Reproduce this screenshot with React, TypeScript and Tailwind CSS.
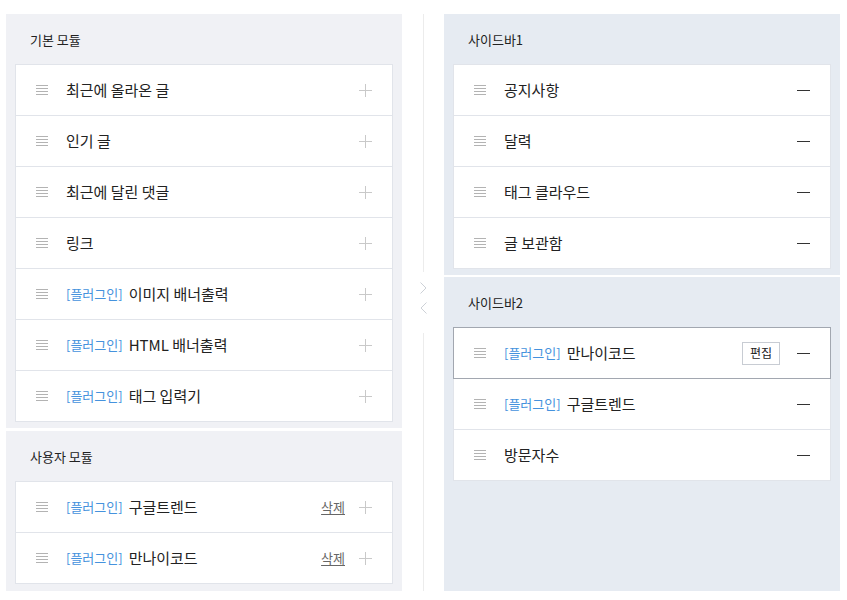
import React from 'react';

type Item = { name: string; plugin?: boolean; remove?: boolean; edit?: boolean; selected?: boolean };

const basic: Item[] = [
  { name: '최근에 올라온 글' },
  { name: '인기 글' },
  { name: '최근에 달린 댓글' },
  { name: '링크' },
  { name: '이미지 배너출력', plugin: true },
  { name: 'HTML 배너출력', plugin: true },
  { name: '태그 입력기', plugin: true },
];

const user: Item[] = [
  { name: '구글트렌드', plugin: true, remove: true },
  { name: '만나이코드', plugin: true, remove: true },
];

const sidebar1: Item[] = [{ name: '공지사항' }, { name: '달력' }, { name: '태그 클라우드' }, { name: '글 보관함' }];

const sidebar2: Item[] = [
  { name: '만나이코드', plugin: true, edit: true, selected: true },
  { name: '구글트렌드', plugin: true },
  { name: '방문자수' },
];

function Handle() {
  return (
    <svg width="12" height="10" viewBox="0 0 12 10" className="shrink-0">
      <g stroke="#b3b3b3" strokeWidth="1">
        <line x1="0" y1="0.5" x2="12" y2="0.5" />
        <line x1="0" y1="3.5" x2="12" y2="3.5" />
        <line x1="0" y1="6.5" x2="12" y2="6.5" />
        <line x1="0" y1="9.5" x2="12" y2="9.5" />
      </g>
    </svg>
  );
}

function Plus() {
  return (
    <svg width="13" height="13" viewBox="0 0 13 13" className="shrink-0">
      <g stroke="#c9c9c9" strokeWidth="1">
        <line x1="0" y1="6.5" x2="13" y2="6.5" />
        <line x1="6.5" y1="0" x2="6.5" y2="13" />
      </g>
    </svg>
  );
}

function Minus() {
  return (
    <svg width="13" height="13" viewBox="0 0 13 13" className="shrink-0">
      <line x1="0" y1="6.5" x2="13" y2="6.5" stroke="#333" strokeWidth="1" />
    </svg>
  );
}

function Row({ item, added }: { item: Item; added?: boolean }) {
  return (
    <div className="relative flex h-[51px] items-center border-b border-[#e1e4ea] pl-[20px] pr-[20px] last:border-b-0 last:h-[50px]">
      {item.selected && <div className="pointer-events-none absolute -inset-px border border-[#a2a7b0]" />}
      <Handle />
      <div className="ml-[18px] flex flex-1 items-center">
        {item.plugin && <span className="mr-[6px] text-[13px] text-[#4592dd]">[플러그인]</span>}
        <span className="text-[15px] text-[#222]">{item.name}</span>
      </div>
      {item.remove && <span className="mr-[14px] text-[13px] text-[#666] underline underline-offset-2">삭제</span>}
      {item.edit && (
        <span className="mr-[17px] flex h-[23px] w-[38px] items-center justify-center border border-[#c8ccd3] bg-white text-[12px] text-[#222]">
          편집
        </span>
      )}
      {added ? <Minus /> : <Plus />}
    </div>
  );
}

function Panel({ title, items, added, className }: { title: string; items: Item[]; added?: boolean; className: string }) {
  return (
    <div className={`px-[9px] pb-[6px] ${className}`}>
      <div className="flex h-[50px] items-center pt-px pl-[15px] text-[13px] text-[#222]">{title}</div>
      <div className="border border-[#e1e4ea] bg-white">
        {items.map((item) => (
          <Row key={item.name} item={item} added={added} />
        ))}
      </div>
    </div>
  );
}

export default function App() {
  return (
    <div
      className="flex h-[600px] bg-white px-[6px] pt-[14px] pb-[9px]"
      style={{ fontFamily: '"Noto Sans CJK KR", "Noto Sans", sans-serif' }}
    >
      <div className="flex w-[396px] flex-col gap-[3px]">
        <Panel title="기본 모듈" items={basic} className="bg-[#f0f1f5]" />
        <Panel title="사용자 모듈" items={user} className="flex-1 bg-[#f0f1f5]" />
      </div>

      <div className="flex w-[42px] flex-col items-center">
        <div className="h-[258px] w-px bg-[#ececec]" />
        <div className="flex flex-col items-center gap-[8px] pt-[10px] pb-[19px]">
          <svg width="7" height="12" viewBox="0 0 7 12">
            <path d="M0.5 0.5 L6 6 L0.5 11.5" fill="none" stroke="#cdd1d7" strokeWidth="1" />
          </svg>
          <svg width="7" height="12" viewBox="0 0 7 12">
            <path d="M6.5 0.5 L1 6 L6.5 11.5" fill="none" stroke="#cdd1d7" strokeWidth="1" />
          </svg>
        </div>
        <div className="w-px flex-1 bg-[#ececec]" />
      </div>

      <div className="flex w-[396px] flex-col gap-[2px]">
        <Panel title="사이드바1" items={sidebar1} added className="bg-[#e6ebf2]" />
        <Panel title="사이드바2" items={sidebar2} added className="flex-1 bg-[#e6ebf2]" />
      </div>
    </div>
  );
}
